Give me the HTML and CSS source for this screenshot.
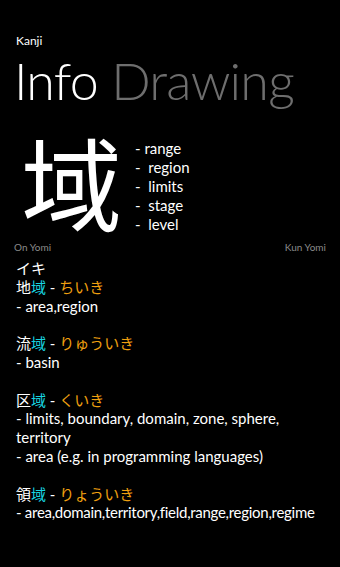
FILE: index.html
```html
<!DOCTYPE html>
<html>
<head>
<meta charset="utf-8">
<link rel="stylesheet" href="styles.css">
</head>
<body>
<div class="page">
  <div class="app-title">Kanji</div>
  <div class="pivot"><span class="pivot-active">Info</span> <span class="pivot-inactive">Drawing</span></div>
  <div class="hero">
    <div class="big-kanji">域</div>
    <div class="meanings">
      <div class="meaning">- range</div>
      <div class="meaning">-  region</div>
      <div class="meaning">-  limits</div>
      <div class="meaning">-  stage</div>
      <div class="meaning">-  level</div>
    </div>
  </div>
  <div class="yomi-labels">
    <span>On Yomi</span>
    <span>Kun Yomi</span>
  </div>
  <div class="readings">
    <div class="line">イキ</div>
    <div class="line">地<span class="hl">域</span> - <span class="kana">ちいき</span></div>
    <div class="line">- area,region</div>
    <div class="line blank"></div>
    <div class="line">流<span class="hl">域</span> - <span class="kana">りゅういき</span></div>
    <div class="line">- basin</div>
    <div class="line blank"></div>
    <div class="line">区<span class="hl">域</span> - <span class="kana">くいき</span></div>
    <div class="line">- limits, boundary, domain, zone, sphere, territory</div>
    <div class="line">- area (e.g. in programming languages)</div>
    <div class="line blank"></div>
    <div class="line">領<span class="hl">域</span> - <span class="kana">りょういき</span></div>
    <div class="line tight">- area,domain,territory,field,range,region,regime</div>
  </div>
</div>
</body>
</html>
```
FILE: styles.css
```css
html, body {
  margin: 0;
  padding: 0;
  background: #000;
}
body {
  width: 340px;
  height: 567px;
  overflow: hidden;
  color: #fff;
  font-family: "Lato", "Noto Sans CJK JP", sans-serif;
}
.page {
  padding: 34px 14px 0 16px;
}
.app-title {
  font-size: 12px;
  line-height: 14px;
}
.pivot {
  font-size: 52px;
  font-weight: 300;
  letter-spacing: -0.8px;
  line-height: 56px;
  margin-top: 4px;
  margin-left: -2px;
  white-space: nowrap;
}
.pivot-inactive {
  color: #6e6e6e;
}
.hero {
  display: flex;
  align-items: flex-start;
  margin-top: 24px;
}
.big-kanji {
  font-family: "Noto Sans CJK JP", sans-serif;
  font-size: 101px;
  line-height: 96px;
  width: 117px;
  margin-left: 5px;
  margin-top: 0;
}
.meanings {
  font-size: 15px;
  line-height: 19px;
  margin-top: 7px;
  margin-left: -3px;
}
.meaning {
  white-space: pre;
}
.yomi-labels {
  display: flex;
  justify-content: space-between;
  font-size: 10px;
  line-height: 12px;
  color: #8a8a8a;
  margin-top: 7px;
  margin-left: -2px;
}
.readings {
  font-size: 15px;
  line-height: 18.8px;
  margin-top: 6px;
}
.line.blank {
  height: 18.8px;
}
.line.tight {
  white-space: nowrap;
  letter-spacing: -0.28px;
}
.hl {
  color: #18d4e0;
}
.kana {
  color: #f0a010;
}
```
